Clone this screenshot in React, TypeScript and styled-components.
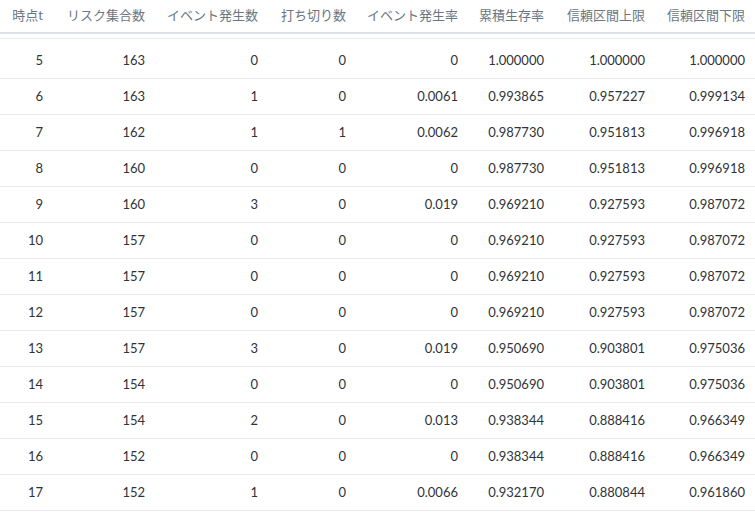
import React from "react";
import styled, { createGlobalStyle } from "styled-components";

const Global = createGlobalStyle`
  body { margin: 0; background: #fff; font-family: Lato, "Noto Sans CJK JP", sans-serif; }
`;

const Table = styled.table`
  border-collapse: collapse;
  table-layout: fixed;
  width: 755px;
  font-size: 13px;
`;
const Th = styled.th<{ w: number }>`
  width: ${(p) => p.w}px;
  height: 33px;
  padding: 0 10px 0 0;
  text-align: right;
  font-weight: 400;
  color: #6b7682;
  border-bottom: 2px solid #dcdfe3;
  white-space: nowrap;
  box-sizing: border-box;
  vertical-align: middle;
  padding-bottom: 3px;
`;
const Spacer = styled.tr`
  height: 5px;
`;
const Tr = styled.tr<{ first?: boolean }>`
  border-top: ${(p) => (p.first ? "1px solid #e8eaed" : "none")};
  border-bottom: 1px solid #e8eaed;
`;
const Td = styled.td<{ first?: boolean }>`
  height: 35px;
  padding: ${(p) => (p.first ? "4px" : "0")} 10px 0 0;
  text-align: right;
  color: #2f3338;
  white-space: nowrap;
`;

const widths = [53, 102, 113, 88, 112, 86, 101, 100];
const heads = ["時点t", "リスク集合数", "イベント発生数", "打ち切り数", "イベント発生率", "累積生存率", "信頼区間上限", "信頼区間下限"];
const rows = [
  ["5", "163", "0", "0", "0", "1.000000", "1.000000", "1.000000"],
  ["6", "163", "1", "0", "0.0061", "0.993865", "0.957227", "0.999134"],
  ["7", "162", "1", "1", "0.0062", "0.987730", "0.951813", "0.996918"],
  ["8", "160", "0", "0", "0", "0.987730", "0.951813", "0.996918"],
  ["9", "160", "3", "0", "0.019", "0.969210", "0.927593", "0.987072"],
  ["10", "157", "0", "0", "0", "0.969210", "0.927593", "0.987072"],
  ["11", "157", "0", "0", "0", "0.969210", "0.927593", "0.987072"],
  ["12", "157", "0", "0", "0", "0.969210", "0.927593", "0.987072"],
  ["13", "157", "3", "0", "0.019", "0.950690", "0.903801", "0.975036"],
  ["14", "154", "0", "0", "0", "0.950690", "0.903801", "0.975036"],
  ["15", "154", "2", "0", "0.013", "0.938344", "0.888416", "0.966349"],
  ["16", "152", "0", "0", "0", "0.938344", "0.888416", "0.966349"],
  ["17", "152", "1", "0", "0.0066", "0.932170", "0.880844", "0.961860"],
];

export default function App() {
  return (
    <>
      <Global />
      <Table>
        <thead>
          <tr>
            {heads.map((h, i) => (
              <Th key={h} w={widths[i]}>{h}</Th>
            ))}
          </tr>
        </thead>
        <tbody>
          <Spacer><td colSpan={8} /></Spacer>
          {rows.map((r, i) => (
            <Tr key={i} first={i === 0}>
              {r.map((c, j) => (
                <Td key={j} first={i === 0}>{c}</Td>
              ))}
            </Tr>
          ))}
        </tbody>
      </Table>
    </>
  );
}
